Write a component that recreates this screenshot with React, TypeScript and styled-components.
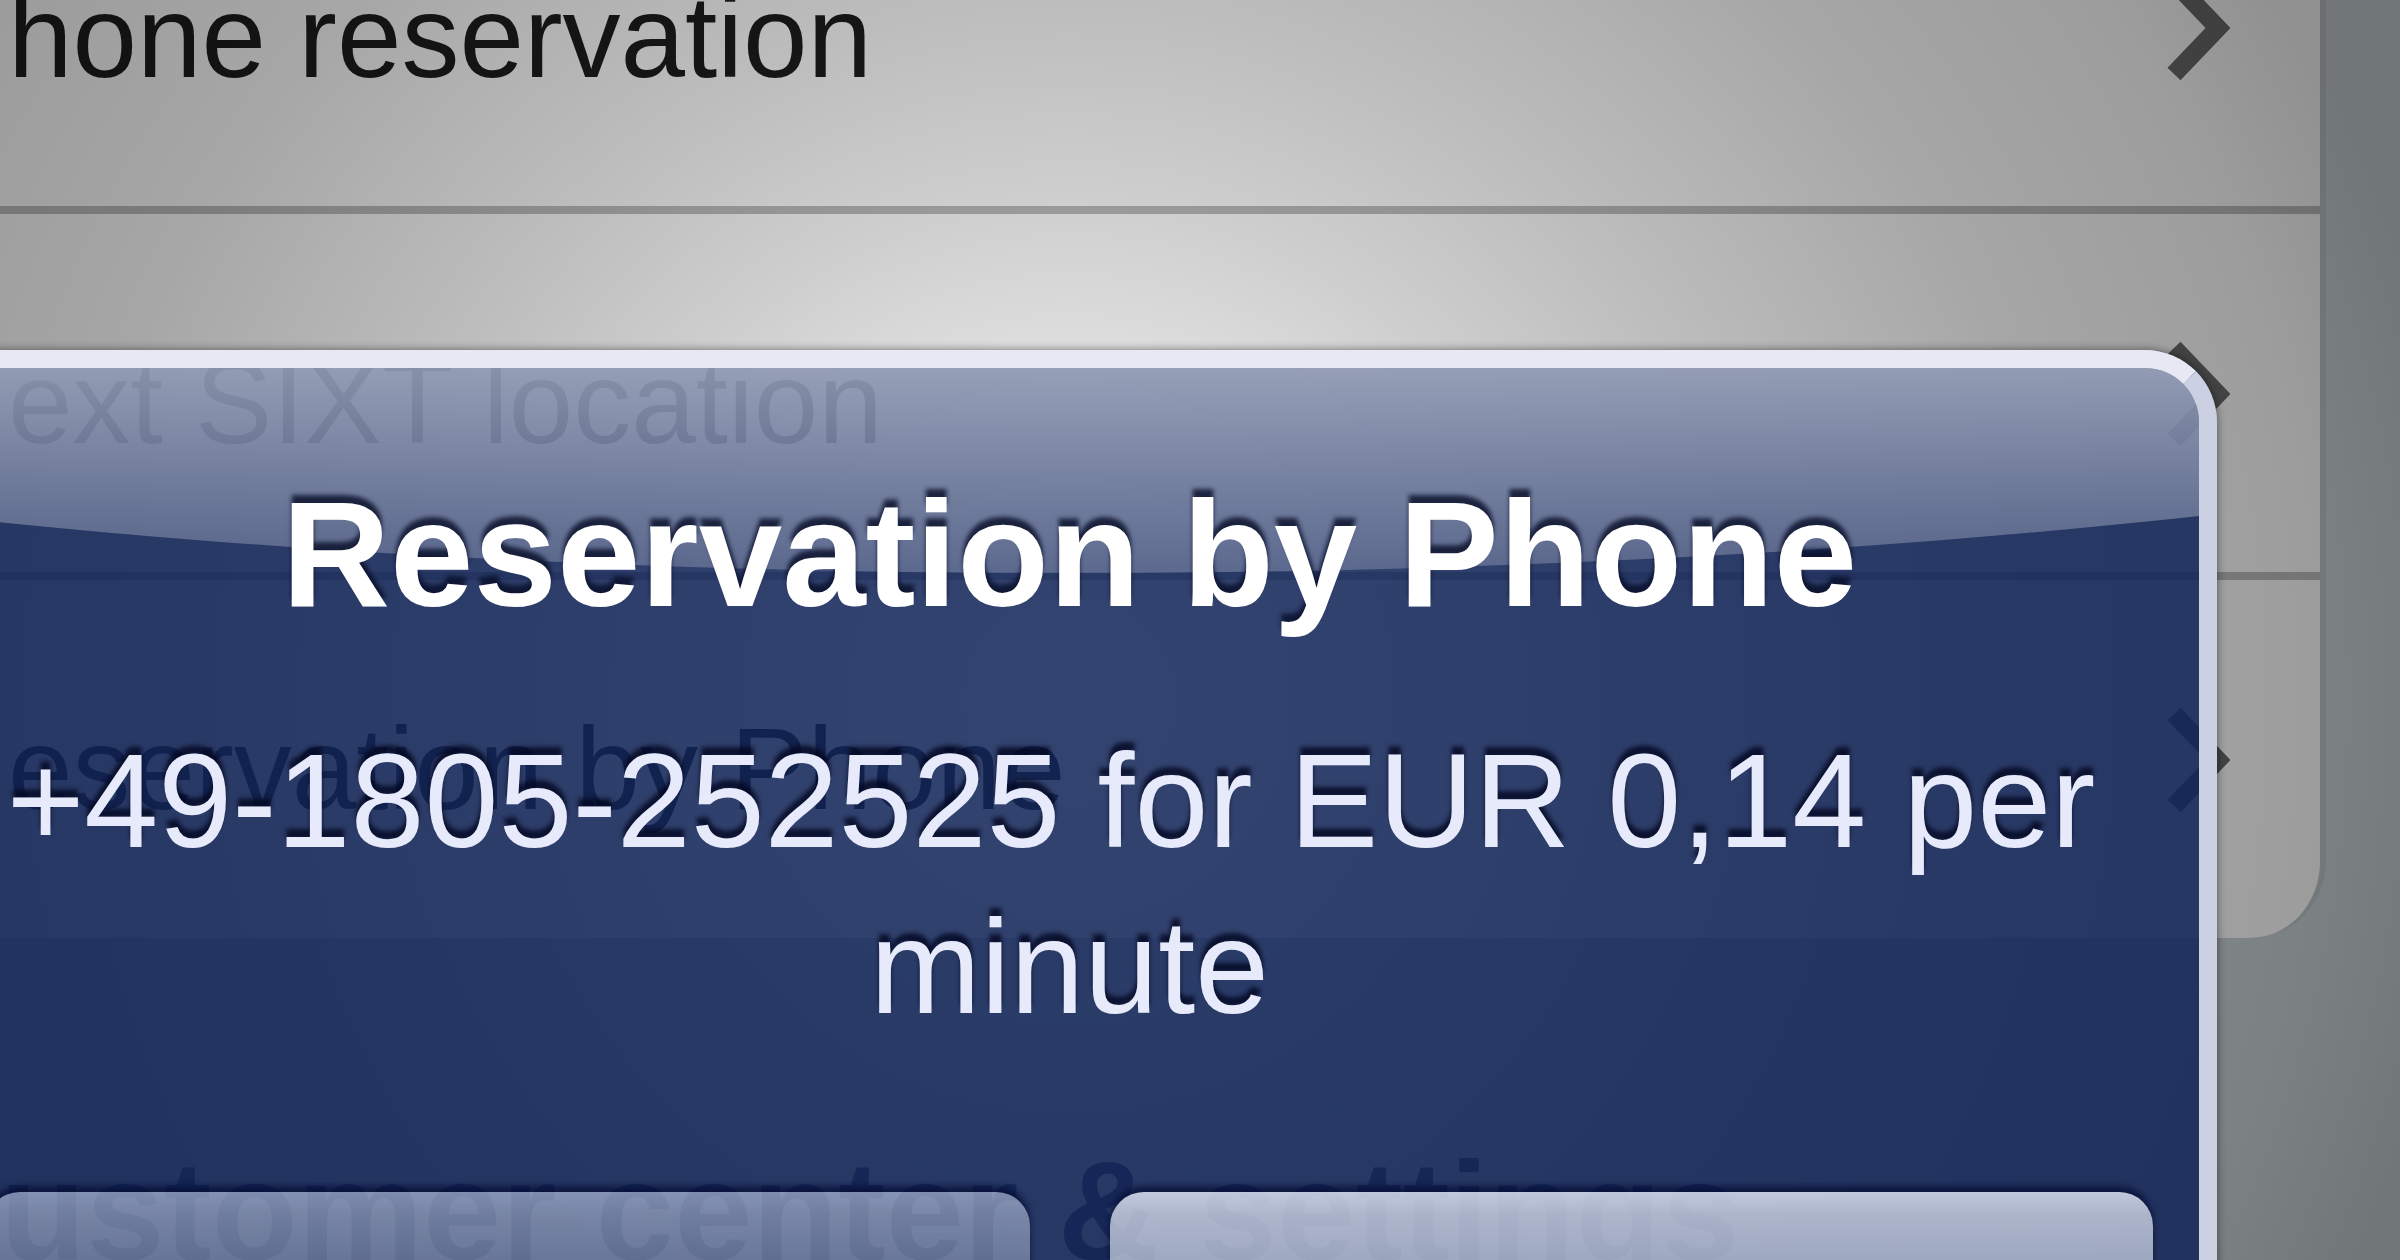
import React from "react";
import styled, { createGlobalStyle } from "styled-components";

const GlobalStyle = createGlobalStyle`
  *, *::before { box-sizing: border-box; }
  body {
    margin: 0;
    background: #c4ccd0;
    font-family: "Liberation Sans", Arial, Helvetica, sans-serif;
  }
`;

const Screen = styled.div`
  position: relative;
  height: 100vh;
  overflow: hidden;
  background: #c4ccd0;
`;

const MenuList = styled.ul`
  list-style: none;
  margin: -152px 74px 0 0;
  padding: 0;
  background: #f8f8f8;
  border-right: 6px solid #b8bfc3;
  border-radius: 0 0 76px 0;
  overflow: hidden;
`;

const MenuItem = styled.li`
  & + & {
    border-top: 8px solid #b8b8b8;
  }
`;

const MenuLink = styled.a`
  display: flex;
  align-items: center;
  justify-content: space-between;
  height: 358px;
  padding: 2px 90px 0 8px;
  color: #1c1c1c;
  font-size: 116px;
  line-height: 132px;
  text-decoration: none;
  white-space: nowrap;
`;

const MenuLabel = styled.span`
  padding-top: 18px;
`;

const ChevronIcon = styled.svg`
  width: 64px;
  height: 108px;
  fill: none;
  stroke: #686868;
  stroke-width: 18;
`;

const SectionTitle = styled.h2`
  margin: 188px 0 0;
  color: #3a4560;
  font-size: 141px;
  line-height: 170px;
  white-space: nowrap;
`;

const Vignette = styled.div`
  position: absolute;
  inset: 0;
  background: radial-gradient(
    circle at 1069px 700px,
    rgba(0, 0, 0, 0.02) 0,
    rgba(0, 0, 0, 0.11) 360px,
    rgba(0, 0, 0, 0.17) 500px,
    rgba(0, 0, 0, 0.24) 700px,
    rgba(0, 0, 0, 0.33) 1000px,
    rgba(0, 0, 0, 0.37) 1250px,
    rgba(0, 0, 0, 0.42) 1400px
  );
`;

const Overlay = styled.div`
  position: absolute;
  inset: 0;
  padding: 350px 183px 0 0;
  overflow: hidden;
`;

const Alert = styled.section`
  position: relative;
  margin-left: -78px;
  padding: 96px 46px 48px;
  border: 18px solid #e4e6f2;
  border-color: #e6e8f3 #ccd0e3;
  border-radius: 72px;
  background: rgba(18, 36, 88, 0.85);
  background-clip: padding-box;
  box-shadow: 0 0 8px rgba(0, 0, 0, 0.5);
  color: #fff;
  text-align: center;

  &::before {
    content: "";
    position: absolute;
    inset: 0 0 auto;
    height: 206px;
    border-radius: 54px 54px 0 0;
    background: linear-gradient(
      rgba(240, 244, 250, 0.53),
      rgba(225, 230, 245, 0.24)
    );
    clip-path: ellipse(100% 425px at 50% -220px);
  }
`;

const AlertTitle = styled.h1`
  position: relative;
  margin: 0;
  font-size: 150px;
  line-height: 180px;
  text-shadow: 0 -8px 4px rgba(8, 14, 40, 0.8);
`;

const AlertMessage = styled.p`
  margin: 74px 0 142px;
  color: #e6eafa;
  font-size: 133px;
  line-height: 166px;
  white-space: nowrap;
  text-shadow: 0 -8px 4px rgba(4, 8, 34, 0.8);
`;

const AlertActions = styled.div`
  display: flex;
  gap: 80px;
`;

const AlertButton = styled.button<{ $primary?: boolean }>`
  flex: 1;
  height: 358px;
  border: 0;
  border-radius: 34px;
  background: ${({ $primary }) =>
    $primary
      ? "linear-gradient(rgba(222, 230, 245, 0.84), rgba(216, 222, 236, 0.76) 22px, rgba(210, 218, 232, 0.68) 80px, rgba(190, 200, 230, 0.3))"
      : "linear-gradient(rgba(215, 226, 250, 0.54), rgba(210, 220, 240, 0.48) 22px, rgba(205, 214, 230, 0.38) 80px, rgba(190, 200, 230, 0.1))"};
  box-shadow: 0 -6px 6px rgba(4, 12, 50, 0.7);
`;

const rows = ["hone reservation", "ext SIXT location", "eservation by Phone"];

const Chevron = () => (
  <ChevronIcon viewBox="0 0 64 108" aria-hidden="true">
    <path d="M8 8 L52 54 L8 100" />
  </ChevronIcon>
);

export default function App() {
  return (
    <Screen>
      <GlobalStyle />
      <MenuList>
        {rows.map((row) => (
          <MenuItem key={row}>
            <MenuLink href="#">
              <MenuLabel>{row}</MenuLabel>
              <Chevron />
            </MenuLink>
          </MenuItem>
        ))}
      </MenuList>
      <SectionTitle>ustomer center &amp; settings</SectionTitle>
      <Vignette />
      <Overlay>
        <Alert role="alertdialog" aria-labelledby="alert-title">
          <AlertTitle id="alert-title">Reservation by Phone</AlertTitle>
          <AlertMessage>
            +49-1805-252525 for EUR 0,14 per&nbsp;
            <br />
            minute
          </AlertMessage>
          <AlertActions>
            <AlertButton type="button" aria-label="Cancel" />
            <AlertButton type="button" aria-label="Call" $primary />
          </AlertActions>
        </Alert>
      </Overlay>
    </Screen>
  );
}
